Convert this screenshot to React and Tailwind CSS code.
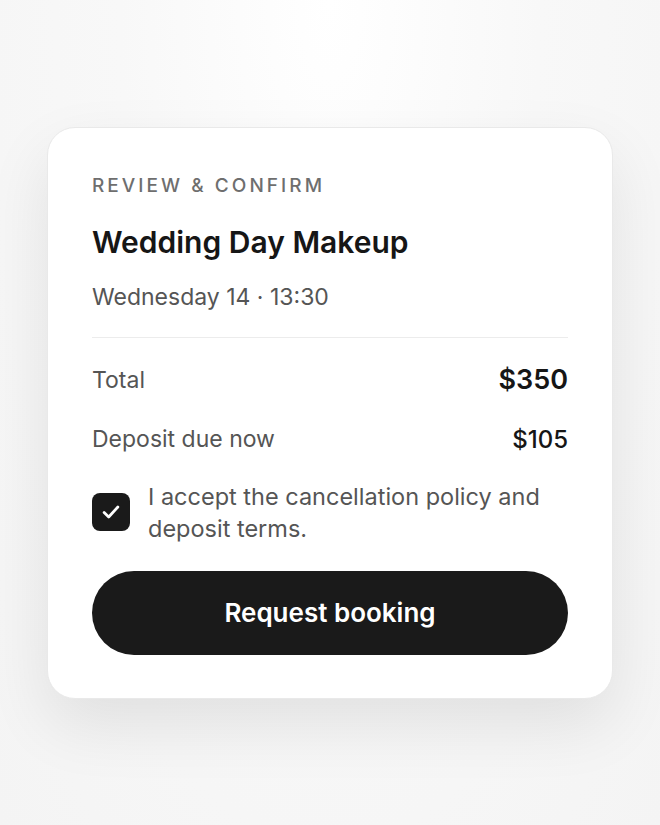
export default function App() {
  return (
    <div
      className="min-h-[825px] w-full flex items-center justify-center bg-[radial-gradient(ellipse_at_50%_0%,#ffffff_0%,#f8f8f8_45%,#f4f4f4_100%)]"
      style={{ fontFamily: "Inter, 'Liberation Sans', sans-serif" }}
    >
      <div className="w-[566px] rounded-[28px] bg-white border border-[#e9e9e9] shadow-[0_26px_64px_rgba(0,0,0,0.09)] px-[44px] pt-[48px] pb-[43px] flex flex-col">
        <div className="text-[19px] font-medium tracking-[0.16em] text-[#6e6e6e] leading-[20px]">
          REVIEW &amp; CONFIRM
        </div>
        <div className="mt-[28px] text-[30px] font-semibold text-[#161616] leading-[36px]">
          Wedding Day Makeup
        </div>
        <div className="mt-[22px] text-[23px] text-[#555555] leading-[30px]">
          Wednesday 14 · 13:30
        </div>
        <div className="mt-[25px] h-px bg-[#ececec]" />
        <div className="mt-[25px] h-[36px] flex items-center justify-between">
          <span className="text-[23px] text-[#555555]">Total</span>
          <span className="text-[27px] font-semibold text-[#161616]">$350</span>
        </div>
        <div className="mt-[23px] h-[36px] flex items-center justify-between">
          <span className="text-[23px] text-[#555555]">Deposit due now</span>
          <span className="text-[24px] font-medium text-[#161616]">$105</span>
        </div>
        <div className="mt-[23px] flex items-start gap-[18px]">
          <div className="mt-[12px] w-[38px] h-[38px] shrink-0 rounded-[8px] bg-[#1a1a1a] flex items-center justify-center">
            <svg width="22" height="22" viewBox="0 0 24 24" fill="none" stroke="white" strokeWidth="3" strokeLinecap="round" strokeLinejoin="round">
              <path d="M4.5 12.5l5 5L19.5 6.5" />
            </svg>
          </div>
          <p className="text-[23.5px] leading-[32px] text-[#555555]">
            I accept the cancellation policy and deposit terms.
          </p>
        </div>
        <button className="mt-[26px] h-[84px] w-full rounded-full bg-[#1a1a1a] text-white text-[26px] font-semibold">
          Request booking
        </button>
      </div>
    </div>
  );
}
